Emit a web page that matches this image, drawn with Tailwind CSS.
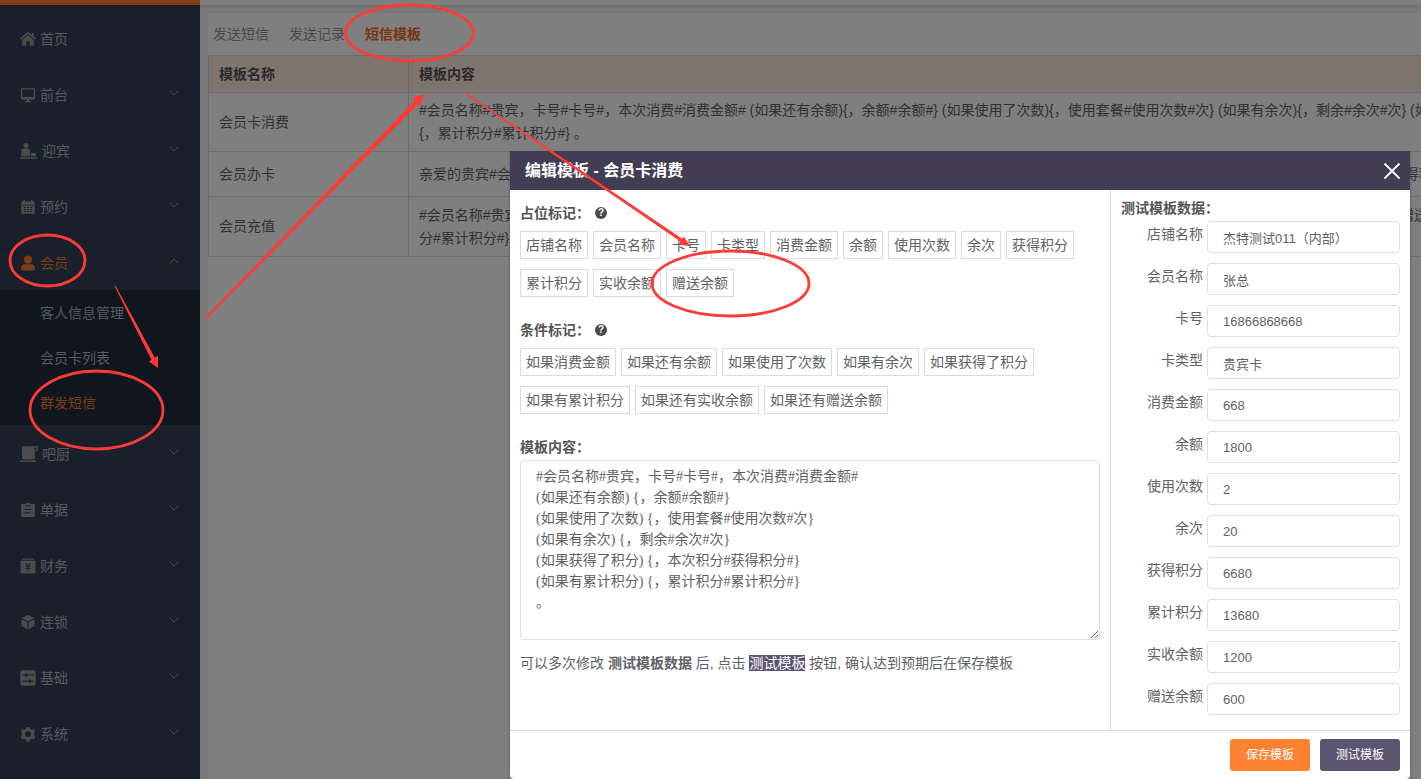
<!DOCTYPE html>
<html lang="zh-CN">
<head>
    <meta charset="UTF-8">
    <meta name="viewport" content="width=device-width, initial-scale=1.0">
    <script src="https://cdn.jsdelivr.net/npm/@tailwindcss/browser@4"></script>
    <title>短信模板</title>
</head>
<body class="relative h-screen overflow-hidden bg-[#f0f0f0] font-['Liberation_Sans','Noto_Sans_CJK_SC',sans-serif] text-sm text-[#606266]">
    <div class="flex h-full">
      <!-- sidebar -->
      <aside class="w-[200px] shrink-0 border-t-[5px] border-[#ff8033] bg-[#334156] pt-[5px]">
        <nav id="menu"></nav>
      </aside>

      <!-- page -->
      <main class="flex min-w-0 flex-1 flex-col">
        <div class="h-[5px] shrink-0 bg-white shadow"></div>
        <section class="mt-2 ml-2 flex-1 overflow-hidden bg-white">
          <div class="flex h-[42px] items-center gap-5 px-[5px]">
            <a href="#" class="text-[#909399]">发送短信</a>
            <a href="#" class="text-[#909399]">发送记录</a>
            <a href="#" class="font-bold text-[#f56a1c]">短信模板</a>
          </div>
          <table class="w-[1700px] table-fixed border-collapse border border-[#d4d4d4] text-left leading-[23px] whitespace-nowrap">
            <thead>
              <tr class="h-[37px] bg-[#ffe8dc] text-[#555]">
                <th class="w-[200px] border border-[#d4d4d4] px-[10px] font-bold">模板名称</th>
                <th class="border border-[#d4d4d4] px-[10px] font-bold">模板内容</th>
              </tr>
            </thead>
            <tbody>
              <tr class="h-[59px]">
                <td class="border border-[#d4d4d4] px-[10px]">会员卡消费</td>
                <td class="border border-[#d4d4d4] px-[10px]">#会员名称#贵宾，卡号#卡号#，本次消费#消费金额# (如果还有余额){，余额#余额#} (如果使用了次数){，使用套餐#使用次数#次} (如果有余次){，剩余#余次#次} (如果获得了积分){，本次积分#获得积分#} (如果有累计积分)<br>{，累计积分#累计积分#} 。</td>
              </tr>
              <tr class="h-[45px]">
                <td class="border border-[#d4d4d4] px-[10px]">会员办卡</td>
                <td class="border border-[#d4d4d4] px-[10px]">亲爱的贵宾#会员名称#，您成功办理#店铺名称# #卡类型#，卡号#卡号#，实收金额#实收余额# (如果还有余额){，余额#余额#} (如果获得了积分){，本次积分#获得积分#}。</td>
              </tr>
              <tr class="h-[60px]">
                <td class="border border-[#d4d4d4] px-[10px]">会员充值</td>
                <td class="border border-[#d4d4d4] px-[10px]">#会员名称#贵宾，卡号#卡号#，本次成功充值#消费金额#元 (如果还有实收余额){，实收余额#实收余额#} (如果有余次){，剩余#余次#次} (如果还有赠送余额){，赠送余额#赠送余额#} (如果有累计积分){，累计积<br>分#累计积分#}。</td>
              </tr>
            </tbody>
          </table>
        </section>
      </main>
    </div>

    <!-- mask -->
    <div class="absolute inset-0 bg-black/50"></div>

    <!-- dialog -->
    <div role="dialog" aria-labelledby="dialog-title" class="absolute top-[151px] right-[11px] w-[900px] rounded-b-sm bg-white shadow-[0_1px_3px_rgba(0,0,0,0.3)]">
      <header class="flex h-[39px] items-center justify-between bg-[#433d54] pr-[9px] pl-[15px] text-white">
        <h2 id="dialog-title" class="text-base font-bold">编辑模板 - 会员卡消费</h2>
        <button type="button" aria-label="关闭">
          <svg class="h-[18px] w-[18px]" viewBox="0 0 18 18" fill="none" stroke="currentColor" stroke-width="1.8"><path d="M1.5 1.5l15 15M16.5 1.5l-15 15"/></svg>
        </button>
      </header>

      <div class="flex">
        <div class="min-w-0 flex-1 p-[10px]">
          <div class="flex h-[26px] items-center gap-[5px]">
            <h3 class="font-bold text-[#555]">占位标记：</h3>
            <button type="button" class="h-3 w-3 rounded-full bg-[#4a4a4a] text-center text-[10px] leading-3 font-bold text-white">?</button>
          </div>
          <div id="placeholders" class="mt-[5px] flex flex-wrap gap-x-[5px] gap-y-[10px]"></div>

          <div class="mt-5 flex h-[26px] items-center gap-[5px]">
            <h3 class="font-bold text-[#555]">条件标记：</h3>
            <button type="button" class="h-3 w-3 rounded-full bg-[#4a4a4a] text-center text-[10px] leading-3 font-bold text-white">?</button>
          </div>
          <div id="conditions" class="mt-[5px] flex flex-wrap gap-x-[5px] gap-y-[10px]"></div>

          <label for="content" class="mt-5 block h-[26px] leading-[26px] font-bold text-[#555]">模板内容：</label>
          <textarea id="content" class="block h-[180px] w-full resize-y rounded border border-[#dcdfe6] px-[15px] py-[5px] font-['Liberation_Serif','Noto_Sans_CJK_SC',serif] leading-[21px]">#会员名称#贵宾，卡号#卡号#，本次消费#消费金额#
(如果还有余额) {，余额#余额#}
(如果使用了次数) {，使用套餐#使用次数#次}
(如果有余次) {，剩余#余次#次}
(如果获得了积分) {，本次积分#获得积分#}
(如果有累计积分) {，累计积分#累计积分#}
。</textarea>
          <p class="mt-[10px] leading-[26px]">可以多次修改 <b>测试模板数据</b> 后, 点击 <span class="bg-[#5c5572] text-white">测试模板</span> 按钮, 确认达到预期后在保存模板</p>
        </div>

        <div class="w-[300px] shrink-0 border-l border-[#dcdcdc] px-[10px] pt-[5px] pb-[15px]">
          <h3 class="h-[26px] leading-[26px] font-bold text-[#555]">测试模板数据：</h3>
          <div id="fields" class="flex flex-col gap-[10px]"></div>
        </div>
      </div>

      <footer class="flex justify-end gap-[10px] border-t border-[#dcdcdc] px-[10px] py-2 text-xs text-white">
        <button type="button" class="h-8 w-20 rounded-[3px] bg-[#ff8233]">保存模板</button>
        <button type="button" class="h-8 w-20 rounded-[3px] bg-[#5c5572]">测试模板</button>
      </footer>
    </div>

    <!-- red marks -->
    <svg class="pointer-events-none absolute top-0 left-0 h-[779px] w-[1421px]" viewBox="0 0 1421 779" fill="none" stroke="#ff3b37" stroke-width="2.8">
      <ellipse cx="47.5" cy="260.5" rx="37.5" ry="25.5"/>
      <ellipse cx="96.5" cy="410" rx="66.5" ry="39"/>
      <ellipse cx="409.5" cy="33" rx="64" ry="28"/>
      <ellipse cx="730.5" cy="283.5" rx="78.5" ry="32.5"/>
      <g fill="#ff3b37" stroke="none">
        <path d="M114.600 286.300L151.400 359.800 149 361.500 158 368V355.500L154.800 357.800 115.600 285.700z"/>
        <path d="M205.200 317.200L414.300 101 412.800 97.800 424 94 420.800 105.400 418 104.200 206.800 318.800z"/>
        <path d="M464.600 93.500L680.400 241.600 678.600 244.400 690.500 246.200 683.600 236.600 682.200 238.800 465.400 92.300z"/>
      </g>
    </svg>

    <script>
const icons = {
  home: `<path d="M8 .8L0 7.600l1.100 1.200L8 3l6.900 5.800L16 7.600l-2.400-2V2h-2v1.900zM2.200 9.100L8 4.200l5.800 4.900v5.700H9.800v-4.600H6.200v4.600h-4z"/>`,
  desk: `<path fill-rule="evenodd" d="M1.800 1.200h12.400a.9.9 0 0 1 .9.9v9.500a.9.9 0 0 1-.9.9H9v1.400h2v1.300H5v-1.300h2v-1.400H1.800a.9.9 0 0 1-.9-.9V2.100a.9.9 0 0 1 .9-.9zM2.200 2.500v7.400h11.600V2.500z"/>`,
  greet: `<circle cx="6" cy="2.600" r="2.500"/><path d="M2.900 5.400h5.600a1.600 1.600 0 0 1 1.600 1.600v6.200H1.300V7a1.600 1.600 0 0 1 1.600-1.600zM11 10h5v3.200h-5zM0 14.200h17V15.800H0z"/>`,
  date: `<path fill-rule="evenodd" d="M3.500 1h1.400v1.600h6.200V1h1.400v1.600h2.200v12.200H1.300V2.600h2.200zM2.600 5.800v.8h10.800v-.8zM4 7.900V9h2V7.900zm3 0V9h2V7.900zm3 0V9h2V7.900zM4 10v1.100h2V10zm3 0v1.100h2V10zm3 0v1.100h2V10zM4 12.100v1h2v-1zm3 0v1h2v-1zm3 0v1h2v-1z"/>`,
  user: `<circle cx="8" cy="4.600" r="4.200"/><path d="M5 9.300h6c2.500 0 4 2 4 4.300 0 1.200-.8 1.900-2 1.900H3c-1.200 0-2-.7-2-1.900C1 11.300 2.500 9.300 5 9.300z"/>`,
  cup: `<path fill-rule="evenodd" d="M2 .3h16v3.200L16.300 5.300h-1.500V11.400c0 1.100-.9 2-2 2H4c-1.100 0-2-.9-2-2zM14.800 1.700v2.200h.9l.9-1V1.700zM0 14.400h16V16H0z"/>`,
  bill: `<path fill-rule="evenodd" d="M6 .8h4v1.200h3.600a1.200 1.200 0 0 1 1.200 1.200V13.800a1.200 1.200 0 0 1-1.200 1.200H2.400a1.200 1.200 0 0 1-1.200-1.200V3.200A1.200 1.200 0 0 1 2.400 2H6zM5 3.200v1h6v-1zM4.600 6.800v1.300h6.800V6.800zm0 3.400v1.300h5.600v-1.300z"/>`,
  money: `<path fill-rule="evenodd" d="M2 .5h12v1.300H2zM.5 2.800h15v12.700H.5zM5.200 5l1.900 3H5.500v1h2v1h-2v1h2v2h1.100v-2h2v-1h-2V9h2V8H8.900l1.900-3H9.600L8 7.500 6.400 5z"/>`,
  box: `<path d="M8 .8l6.200 3.300L8 7.500 1.800 4.100zM1.500 5.100l5.900 3.300v6.900l-5.900-3.200zM14.500 5.100L8.600 8.400v6.900l5.900-3.200z"/>`,
  base: `<path fill-rule="evenodd" d="M2.300.2h11.400a2 2 0 0 1 2 2v11.600a2 2 0 0 1-2 2H2.300a2 2 0 0 1-2-2V2.200a2 2 0 0 1 2-2zM2.600 4.400v1.200h2.600v1h2v-1h6.500V4.400H7.200v-1h-2v1zM2.600 10.600v1.200h6.200v1h2v-1h2.900v-1.200h-2.900v-1h-2v1z"/>`,
  gear: `<path fill-rule="evenodd" d="M6.300 1h3.400l.5 2 1.400.8 2-.6 1.700 2.900-1.500 1.400v1.600l1.500 1.400-1.700 2.900-2-.6-1.400.8-.5 2H6.300l-.5-2-1.400-.8-2 .6L.7 10.500l1.500-1.400V7.500L.7 6.100l1.700-2.900 2 .6L5.800 3zM8 5.300a3 3 0 1 0 0 6 3 3 0 0 0 0-6z"/>`,
};

const menu = [
  { name: "首页", icon: "home" },
  { name: "前台", icon: "desk", sub: [] },
  { name: "迎宾", icon: "greet", sub: [] },
  { name: "预约", icon: "date", sub: [] },
  { name: "会员", icon: "user", open: true, sub: ["客人信息管理", "会员卡列表", "群发短信"] },
  { name: "吧厨", icon: "cup", sub: [] },
  { name: "单据", icon: "bill", sub: [] },
  { name: "财务", icon: "money", sub: [] },
  { name: "连锁", icon: "box", sub: [] },
  { name: "基础", icon: "base", sub: [] },
  { name: "系统", icon: "gear", sub: [] },
];

document.getElementById("menu").innerHTML = menu
  .map((item) => {
    const wide = item.icon === "greet" || item.icon === "cup";
    const arrow = item.sub
      ? `<svg class="mb-[3px] ml-auto h-[6px] w-[10px] ${item.open ? "rotate-180" : "text-[#8a8f98]"}" viewBox="0 0 10 6" fill="none" stroke="currentColor" stroke-width="1"><path d="M.7.8L5 5 9.300.8"/></svg>`
      : "";
    const sub = item.open
      ? `<div class="bg-[#1f2d3b]">${item.sub
          .map((s) => `<a href="#" class="flex h-[45px] items-center pl-10 ${s === "群发短信" ? "text-[#f57a2c]" : "text-[#a9b4c2]"}">${s}</a>`)
          .join("")}</div>`
      : "";
    return `
      <a href="#" class="flex h-14 items-center gap-1 pt-px pr-[21px] pl-5 ${item.open ? "text-[#f57a2c]" : "text-[#a9b4c2]"}">
        <svg class="h-4 ${wide ? "w-[18px]" : "w-4"} ${item.open ? "" : "text-[#999]"}" viewBox="0 0 ${wide ? 18 : 16} 16" fill="currentColor">${icons[item.icon]}</svg>
        <span>${item.name}</span>
        ${arrow}
      </a>${sub}`;
  })
  .join("");

const tags = (list) =>
  list.map((t) => `<button type="button" class="h-7 border border-[#dcdcdc] px-[5px]">${t}</button>`).join("");

document.getElementById("placeholders").innerHTML = tags([
  "店铺名称", "会员名称", "卡号", "卡类型", "消费金额", "余额", "使用次数", "余次", "获得积分",
  "累计积分", "实收余额", "赠送余额",
]);
document.getElementById("conditions").innerHTML = tags([
  "如果消费金额", "如果还有余额", "如果使用了次数", "如果有余次", "如果获得了积分",
  "如果有累计积分", "如果还有实收余额", "如果还有赠送余额",
]);

const fields = [
  ["店铺名称", "杰特测试011（内部）"],
  ["会员名称", "张总"],
  ["卡号", "16866868668"],
  ["卡类型", "贵宾卡"],
  ["消费金额", "668"],
  ["余额", "1800"],
  ["使用次数", "2"],
  ["余次", "20"],
  ["获得积分", "6680"],
  ["累计积分", "13680"],
  ["实收余额", "1200"],
  ["赠送余额", "600"],
];
document.getElementById("fields").innerHTML = fields
  .map(
    ([label, value], i) => `
      <div class="flex gap-1">
        <label for="field-${i}" class="w-[82px] shrink-0 text-right leading-[26px]">${label}</label>
        <input id="field-${i}" type="text" value="${value}" class="h-8 min-w-0 flex-1 rounded border border-[#dcdfe6] px-[15px] text-[13px]">
      </div>`
  )
  .join("");
    </script>
</body>
</html>
